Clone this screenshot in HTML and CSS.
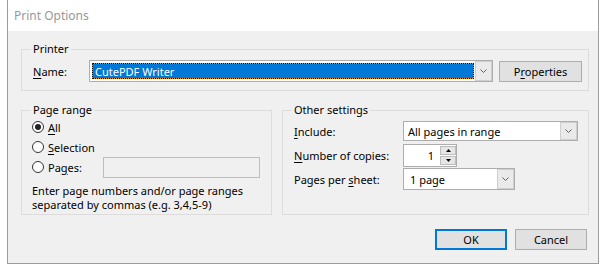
FILE: index.html
```html
<!DOCTYPE html>
<html lang="en">
<head>
<meta charset="UTF-8">
<title>Print Options</title>
<link rel="stylesheet" href="styles.css">
</head>
<body>
<div class="dialog">
    <div class="titlebar">Print Options</div>
    <div class="content">
        <fieldset class="group printer">
            <legend>Printer</legend>
            <div class="printer-row">
                <label class="name-label"><u>N</u>ame:</label>
                <div class="combo printer-combo">
                    <span class="combo-value selected">CutePDF Writer</span>
                    <span class="drop"><svg width="7" height="4" viewBox="0 0 7 4"><polyline points="0.5,0.5 3.5,3.5 6.5,0.5" fill="none" stroke="#606060" stroke-width="1"/></svg></span>
                </div>
                <button class="btn props">P<u>r</u>operties</button>
            </div>
        </fieldset>
        <div class="groups">
            <fieldset class="group range">
                <legend>Page range</legend>
                <div class="radio-row"><span class="radio checked"></span><span><u>A</u>ll</span></div>
                <div class="radio-row"><span class="radio"></span><span><u>S</u>election</span></div>
                <div class="radio-row">
                    <span class="radio"></span><span class="pages-label">Pa<u>g</u>es:</span>
                    <span class="pages-box"></span>
                </div>
                <p class="hint">Enter page numbers and/or page ranges</p>
                <p class="hint">separated by commas (e.g. 3,4,5-9)</p>
            </fieldset>
            <fieldset class="group other">
                <legend>Other settings</legend>
                <div class="setting-row">
                    <label class="setting-label"><u>I</u>nclude:</label>
                    <div class="combo include-combo">
                        <span class="combo-value">All pages in range</span>
                        <span class="drop"><svg width="7" height="4" viewBox="0 0 7 4"><polyline points="0.5,0.5 3.5,3.5 6.5,0.5" fill="none" stroke="#606060" stroke-width="1"/></svg></span>
                    </div>
                </div>
                <div class="setting-row">
                    <label class="setting-label"><u>N</u>umber of copies:</label>
                    <div class="spin">
                        <span class="spin-value">1</span>
                        <span class="spin-btns">
                            <span class="spin-btn"><svg width="5" height="3" viewBox="0 0 5 3"><polygon points="2.5,0 5,3 0,3" fill="#000"/></svg></span>
                            <span class="spin-btn"><svg width="5" height="3" viewBox="0 0 5 3"><polygon points="0,0 5,0 2.5,3" fill="#000"/></svg></span>
                        </span>
                    </div>
                </div>
                <div class="setting-row">
                    <label class="setting-label">Pages per <u>s</u>heet:</label>
                    <div class="combo sheet-combo">
                        <span class="combo-value">1 page</span>
                        <span class="drop"><svg width="7" height="4" viewBox="0 0 7 4"><polyline points="0.5,0.5 3.5,3.5 6.5,0.5" fill="none" stroke="#606060" stroke-width="1"/></svg></span>
                    </div>
                </div>
            </fieldset>
        </div>
        <div class="actions">
            <button class="btn default">OK</button>
            <button class="btn">Cancel</button>
        </div>
    </div>
</div>
</body>
</html>
```

FILE: styles.css
```css
body {
    margin: 0;
    background: #fff;
    font-family: "Noto Sans", "Open Sans", sans-serif;
    font-size: 11px;
    color: #000;
}
u {
    text-decoration: underline;
    text-underline-offset: 2px;
}
.dialog {
    margin-left: 7px;
    width: 592px;
    height: 264px;
    box-sizing: border-box;
    border: 1px solid #9c9c9c;
    border-top: 0;
    background: #f0f0f0;
}
.titlebar {
    height: 31px;
    background: #fff;
    padding-left: 6px;
    line-height: 31px;
    font-size: 12px;
    color: #999;
}
.content {
    padding: 0 9px 0 13px;
}
.group {
    margin: 0;
    min-width: 0;
    border: 1px solid #dcdcdc;
    box-sizing: border-box;
}
.group legend {
    padding: 0 2px;
    margin-left: -2px;
    line-height: 14px;
}
.printer {
    margin-top: 11px;
    width: 568px;
    padding: 4px 6px 8px 11px;
}
.printer-row {
    display: flex;
    align-items: center;
    height: 22px;
}
.name-label {
    width: 56px;
}
.combo {
    display: flex;
    box-sizing: border-box;
    border: 1px solid #adadad;
    background: #fff;
}
.combo-value {
    flex: 1;
    display: flex;
    align-items: center;
    padding-left: 4px;
}
.combo-value.selected {
    margin: 2px 1px 2px 2px;
    padding-left: 2px;
    border: 1px dotted #111;
    background: #f08a24;
    box-shadow: inset 0 0 0 40px #0078d7;
    color: #fff;
}
.drop {
    width: 17px;
    box-sizing: border-box;
    border: 1px solid #cfcfcf;
    background: #eaeaea;
    display: flex;
    align-items: center;
    justify-content: center;
}
.printer-combo {
    width: 404px;
    height: 22px;
}
.btn {
    height: 21px;
    box-sizing: border-box;
    padding: 0;
    border: 1px solid #adadad;
    background: #e1e1e1;
    font: inherit;
    color: #000;
}
.props {
    width: 83px;
    margin-left: 6px;
}
.groups {
    display: flex;
    gap: 10px;
    margin-top: 12px;
    height: 112px;
}
.range {
    width: 251px;
    padding: 0 11px 0 10px;
}
.range legend {
    margin-left: -1px;
}
.radio-row {
    display: flex;
    align-items: center;
    height: 20px;
}
.radio {
    width: 12px;
    height: 12px;
    box-sizing: border-box;
    border: 1px solid #333;
    border-radius: 50%;
    background: #fff;
    margin-right: 4px;
    display: flex;
    align-items: center;
    justify-content: center;
}
.radio.checked::after {
    content: "";
    width: 6px;
    height: 6px;
    border-radius: 50%;
    background: #222;
}
.pages-label {
    width: 55px;
}
.pages-box {
    width: 157px;
    height: 21px;
    box-sizing: border-box;
    border: 1px solid #a6c2e2;
    background: #f0f0f0;
}
.hint {
    margin: 0;
    height: 14px;
    line-height: 14px;
    white-space: nowrap;
}
.range .radio-row + .hint {
    margin-top: 7px;
}
.other {
    width: 307px;
    padding: 2px 10px 0 11px;
}
.setting-row {
    display: flex;
    align-items: center;
    height: 24px;
}
.setting-label {
    width: 109px;
}
.include-combo {
    width: 175px;
    height: 20px;
}
.sheet-combo {
    width: 112px;
    height: 22px;
}
.sheet-combo .combo-value {
    padding-left: 6px;
}
.spin {
    width: 54px;
    height: 23px;
    box-sizing: border-box;
    border: 1px solid #adadad;
    background: #fff;
    display: flex;
}
.spin-value {
    flex: 1;
    text-align: right;
    padding-right: 6px;
    line-height: 21px;
}
.spin-btns {
    width: 16px;
    display: flex;
    flex-direction: column;
    gap: 1px;
    padding: 1px 0;
}
.spin-btn {
    flex: 1;
    border: 1px solid #bcbcbc;
    background: #e6e6e6;
    display: flex;
    align-items: center;
    justify-content: center;
}
.actions {
    display: flex;
    justify-content: flex-end;
    gap: 8px;
    margin-top: 14px;
    padding-right: 2px;
}
.actions .btn {
    width: 72px;
}
.btn.default {
    border: 2px solid #0078d7;
}
```
